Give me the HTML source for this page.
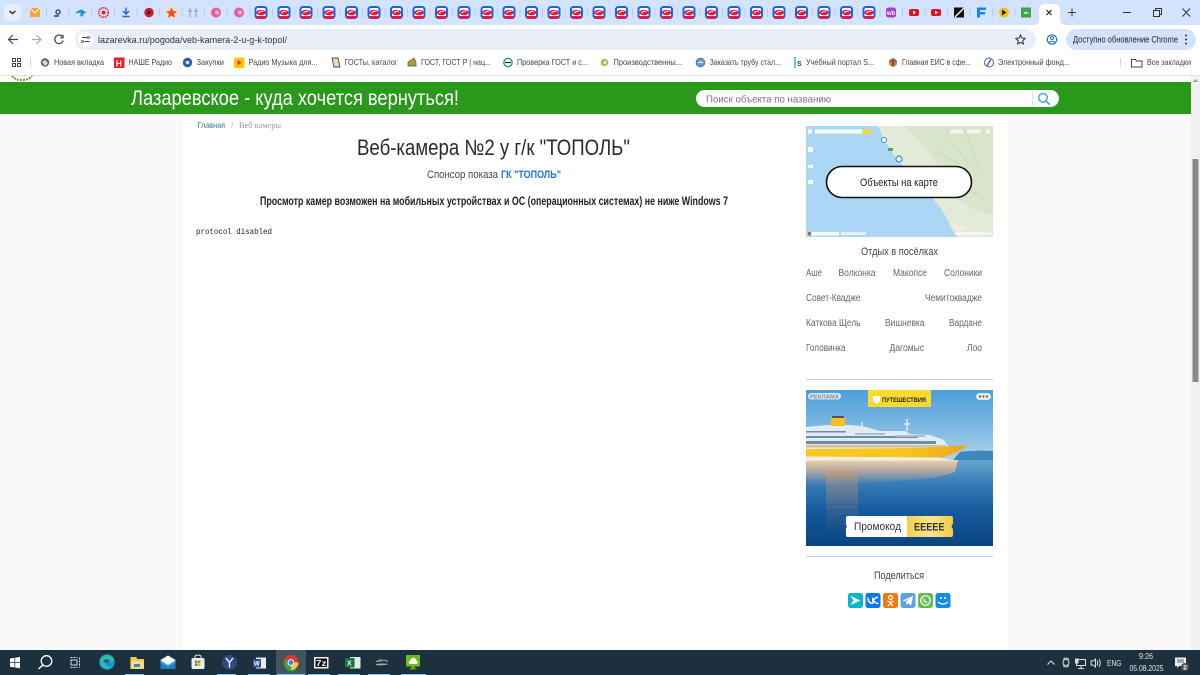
<!DOCTYPE html>
<html><head><meta charset="utf-8"><title>Веб-камера №2 у г/к "ТОПОЛЬ"</title>
<style>html,body{margin:0;padding:0;width:1200px;height:675px;overflow:hidden;background:#fff}svg{display:block}text{font-family:"Liberation Sans","Noto Sans CJK SC",sans-serif}.b{font-size:8.5px;fill:#444}.l{font-size:10px;fill:#666}</style></head><body>
<svg width="1200" height="675" viewBox="0 0 1200 675" xmlns="http://www.w3.org/2000/svg">
<defs>
<symbol id="r" viewBox="0 0 14 14" overflow="visible"><rect x="1.5" y="1.5" width="11" height="11" rx="2.5" fill="#fff" stroke="#1565e8" stroke-width="2"/><path d="M2 10.5h10v2.5H2z" fill="#e8173f"/><ellipse cx="7" cy="7" rx="4.6" ry="2.8" fill="#e8173f"/><path d="M4.5 7.5Q7 5 9.5 5.7" stroke="#fff" fill="none" stroke-width=".9"/></symbol>
<linearGradient id="sky" x1="0" y1="0" x2="0" y2="1"><stop offset="0" stop-color="#4c9fd9"/><stop offset=".6" stop-color="#85bde3"/><stop offset="1" stop-color="#b4d6ea"/></linearGradient>
<linearGradient id="sea" x1="0" y1="0" x2="0" y2="1"><stop offset="0" stop-color="#6ba4cf"/><stop offset=".3" stop-color="#3279b5"/><stop offset=".62" stop-color="#15599a"/><stop offset="1" stop-color="#0a4480"/></linearGradient>
<linearGradient id="refl" x1="0" y1="0" x2="0" y2="1"><stop offset="0" stop-color="#f0d3a8"/><stop offset=".45" stop-color="#c8ab98" stop-opacity=".75"/><stop offset="1" stop-color="#8f8f9f" stop-opacity="0"/></linearGradient>
<linearGradient id="refl2" x1="0" y1="0" x2="0" y2="1"><stop offset="0" stop-color="#d29a6c" stop-opacity=".5"/><stop offset="1" stop-color="#b07c60" stop-opacity="0"/></linearGradient>
<linearGradient id="hull" x1="0" y1="0" x2="1" y2="0"><stop offset="0" stop-color="#f9c81e"/><stop offset=".6" stop-color="#f8c520"/><stop offset="1" stop-color="#eea71a"/></linearGradient>
<linearGradient id="gold" x1="0" y1="0" x2="1" y2="0"><stop offset="0" stop-color="#f4cf4b"/><stop offset=".5" stop-color="#fbe68b"/><stop offset="1" stop-color="#f3cb45"/></linearGradient>
</defs>

<!-- page -->
<rect y="75" width="1200" height="575" fill="#f9f9f9"/>
<rect x="183" y="114" width="825" height="536" fill="#fff"/>
<rect y="75" width="1191" height="7" fill="#fff"/>
<rect y="82" width="1191" height="32" fill="#2a981b"/>
<path d="M12 76q3 4 10 4t10-4" fill="none" stroke="#9a8a2a" stroke-width="2" stroke-dasharray="2 1"/>
<rect x="1191" y="75" width="9" height="575" fill="#f1f1f1"/>
<rect x="1192.500" y="159" width="6" height="223" fill="#8a8a8a"/>
<path d="M1195.500 79l-3 3h6z" fill="#a3a3a3"/>
<text x="131" y="105" font-size="21" fill="#fff" textLength="328" lengthAdjust="spacingAndGlyphs">Лазаревское - куда хочется вернуться!</text>
<rect x="696" y="90" width="363" height="17" rx="8.500" fill="#fff"/>
<text x="706" y="102.500" font-size="10.500" fill="#777" textLength="125" lengthAdjust="spacingAndGlyphs">Поиск объекта по названию</text>
<path d="M1032.500 91v15" stroke="#e4e4e4"/>
<circle cx="1043" cy="97.800" r="4.300" fill="none" stroke="#45a9d2" stroke-width="1.500"/><path d="M1046 101l3.500 3.500" stroke="#45a9d2" stroke-width="1.700"/>

<!-- main content -->
<text x="197.500" y="128" font-size="8.500" fill="#3a7396" textLength="27.500" lengthAdjust="spacingAndGlyphs">Главная</text>
<text x="231" y="128" font-size="8.500" fill="#bbb">/</text>
<text x="239" y="128" font-size="8.500" fill="#999" style="font-family:'Liberation Serif',serif" textLength="42" lengthAdjust="spacingAndGlyphs">Веб камеры</text>
<text x="357" y="155" font-size="22" fill="#2b2b2b" textLength="273" lengthAdjust="spacingAndGlyphs">Веб-камера №2 у г/к "ТОПОЛЬ"</text>
<text x="427" y="178" font-size="11" fill="#444" textLength="71" lengthAdjust="spacingAndGlyphs">Спонсор показа</text>
<text x="501" y="178" font-size="11" font-weight="bold" fill="#1a73e8" textLength="60" lengthAdjust="spacingAndGlyphs">ГК "ТОПОЛЬ"</text>
<text x="260" y="205" font-size="11.500" font-weight="bold" fill="#222" textLength="468" lengthAdjust="spacingAndGlyphs">Просмотр камер возможен на мобильных устройствах и ОС (операционных системах) не ниже Windows 7</text>
<text x="196" y="234" font-size="8" fill="#222" style="font-family:'Liberation Mono',monospace" textLength="76" lengthAdjust="spacingAndGlyphs">protocol disabled</text>

<!-- map -->
<rect x="806" y="126" width="187" height="111" fill="#abd6f4"/>
<path d="M878 126Q886 146 899 162Q920 178 934 200Q946 214 950 226L957 237H993V126Z" fill="#e3ebd8"/>
<path d="M905 126Q940 160 950 190Q965 210 993 215V126Z" fill="#d6e4c8" opacity=".8"/>
<path d="M950 140l20 25M965 130l15 40M935 150l25 15M955 180l30 20" stroke="#c6d8b8" fill="none" stroke-width="2" opacity=".5"/>
<path d="M950 223l8 9 10-4z" fill="#f1ece0"/>
<rect x="815" y="129.500" width="57" height="4" fill="#fff"/><rect x="862" y="129.500" width="10" height="4" fill="#f8d53a"/>
<rect x="808" y="129.500" width="4" height="4" fill="#fff"/>
<rect x="950" y="129.500" width="13" height="4" rx="2" fill="#f4f6f2"/><rect x="967" y="129.500" width="14" height="4" rx="2" fill="#f4f6f2"/><rect x="986" y="129.500" width="4" height="4" fill="#f4f6f2"/>
<rect x="808" y="147" width="5" height="5" fill="#fff"/><rect x="808" y="165" width="5" height="3" fill="#fff"/><rect x="808" y="180" width="5" height="4" fill="#fff"/>
<rect x="808" y="232" width="31" height="3.500" fill="#fff"/><rect x="808" y="232" width="3" height="3.500" fill="#d8524a"/><rect x="841" y="232" width="25" height="3" fill="#fff" opacity=".65"/><rect x="955" y="232" width="36" height="3" fill="#fff" opacity=".55"/>
<rect x="888" y="148" width="5" height="3" fill="#4aa568"/>
<circle cx="884" cy="140" r="2.500" fill="#fff" stroke="#2f8fd8"/><circle cx="899" cy="159" r="3" fill="#fff" stroke="#2f8fd8" stroke-width="1.200"/>
<rect x="826.500" y="166.500" width="145" height="31" rx="15.500" fill="#fff" stroke="#111" stroke-width="1.600"/>
<text x="860" y="186" font-size="11" fill="#222" textLength="78" lengthAdjust="spacingAndGlyphs">Объекты на карте</text>

<!-- villages -->
<text x="861" y="255" font-size="11" fill="#444" textLength="77" lengthAdjust="spacingAndGlyphs">Отдых в посёлках</text>
<g>
<text class="l" x="806" y="276" textLength="16" lengthAdjust="spacingAndGlyphs">Аше</text>
<text class="l" x="838.500" y="276" textLength="37" lengthAdjust="spacingAndGlyphs">Волконка</text>
<text class="l" x="893" y="276" textLength="34" lengthAdjust="spacingAndGlyphs">Макопсе</text>
<text class="l" x="944" y="276" textLength="38" lengthAdjust="spacingAndGlyphs">Солоники</text>
<text class="l" x="806" y="301" textLength="54.500" lengthAdjust="spacingAndGlyphs">Совет-Квадже</text>
<text class="l" x="925" y="301" textLength="57" lengthAdjust="spacingAndGlyphs">Чемитоквадже</text>
<text class="l" x="806" y="326" textLength="54.500" lengthAdjust="spacingAndGlyphs">Каткова Щель</text>
<text class="l" x="885" y="326" textLength="39.500" lengthAdjust="spacingAndGlyphs">Вишневка</text>
<text class="l" x="949" y="326" textLength="33" lengthAdjust="spacingAndGlyphs">Вардане</text>
<text class="l" x="806" y="351" textLength="39.500" lengthAdjust="spacingAndGlyphs">Головинка</text>
<text class="l" x="889.500" y="351" textLength="34.500" lengthAdjust="spacingAndGlyphs">Дагомыс</text>
<text class="l" x="967" y="351" textLength="15" lengthAdjust="spacingAndGlyphs">Лоо</text>
</g>
<path d="M806 379.500h187M806 556.500h187" stroke="#ccc"/>

<!-- ad -->
<rect x="806" y="390" width="187" height="72" fill="url(#sky)"/>
<path d="M960 452q15-2 33-1v9h-40z" fill="#3f88bf"/>
<rect x="806" y="460" width="187" height="86" fill="url(#sea)"/>
<path d="M806 460H958L955 472L935 478L880 482L806 486Z" fill="url(#refl)"/>
<path d="M826 470h32v62h-32z" fill="url(#refl2)"/>
<g stroke="#0b4a8a" opacity=".3"><path d="M806 505h187M806 510h187M806 516h40M806 522h40M806 528h40M806 534h40M806 540h187"/></g>
<!-- ship -->
<path d="M806 427L828 425H848L862 426L880 431L905 431L910 434L930 435L944 440L948 447L806 451Z" fill="#e4ecf3"/>
<path d="M806 436h112v2H806zM806 441h130v3H806zM806 431h40v1.500H806z" fill="#6b8cac"/>
<path d="M855 433h30v2h-30zM895 435h30v2h-30z" fill="#a6bfd6"/>
<path d="M806 445h140v2.500H806z" fill="#d7c08a"/>
<rect x="831" y="418" width="14" height="8" fill="#f5c11f"/><rect x="832" y="416" width="12" height="2" fill="#4b5660"/>
<path d="M862 428v-6M907 431v-12M904 424h6" stroke="#e0e8ef" stroke-width="1.500"/>
<path d="M806 449L925 448L968 445L961 450Q950 456 938 458L806 457Z" fill="url(#hull)"/>
<path d="M806 456.500L938 457.500L955 460.500H806Z" fill="#eef0e8"/>
<rect x="868" y="390" width="63" height="17" rx="1" fill="#fcd92f"/>
<path d="M873 396h7v5l-3.500 3-3.500-3z" fill="#fff"/>
<text x="882" y="402" font-size="6.500" font-weight="bold" fill="#222" textLength="44" lengthAdjust="spacingAndGlyphs">ПУТЕШЕСТВИЯ</text>
<rect x="808" y="393" width="33" height="6.500" rx="3.200" fill="#d9e7f1"/>
<text x="810" y="398.500" font-size="5.500" font-weight="bold" fill="#7e8c99" textLength="29" lengthAdjust="spacingAndGlyphs">РЕКЛАМА</text>
<rect x="976" y="393" width="15" height="7" rx="3.500" fill="#dfeaf2"/>
<circle cx="980" cy="396.500" r="1" fill="#444"/><circle cx="983.500" cy="396.500" r="1" fill="#444"/><circle cx="987" cy="396.500" r="1" fill="#444"/>
<path d="M848 516h59v21h-59a2 2 0 0 1-2-2v-6.500a3 3 0 0 0 0-4V518a2 2 0 0 1 2-2z" fill="#fff"/>
<path d="M907 516h44a2 2 0 0 1 2 2v6a3 3 0 0 0 0 5v6a2 2 0 0 1-2 2h-44z" fill="url(#gold)"/>
<text x="854" y="530" font-size="11" fill="#333" textLength="47" lengthAdjust="spacingAndGlyphs">Промокод</text>
<text x="914" y="530.500" font-size="11" font-weight="bold" fill="#333" textLength="30.500" lengthAdjust="spacingAndGlyphs">ЕЕЕЕЕ</text>

<text x="874" y="579" font-size="11" fill="#444" textLength="50" lengthAdjust="spacingAndGlyphs">Поделиться</text>
<!-- share -->
<rect x="848" y="593" width="15" height="15" rx="2.500" fill="#08b8c8"/><path d="M850.500 596l10 4.500-10 4.500 3-4.500zM853.500 600.500h4" fill="#fff"/>
<rect x="865.500" y="593" width="15" height="15" rx="2.500" fill="#0b79f2"/><path d="M868 597.500c0 4 2 5.800 4.800 5.800v-5.800M873 600.500l3-3M873 600.500l3.500 3M876 597.500h2M876.500 603.300h2" stroke="#fff" stroke-width="1.400" fill="none"/>
<rect x="883" y="593" width="15" height="15" rx="2.500" fill="#f7780f"/><circle cx="890.500" cy="597.500" r="2" fill="none" stroke="#fff" stroke-width="1.200"/><path d="M887.500 601q3 2 6 0M890.500 602v2M890.500 603l-2.500 3M890.500 603l2.500 3" stroke="#fff" stroke-width="1.200" fill="none"/>
<rect x="900.500" y="593" width="15" height="15" rx="2.500" fill="#5da4dc"/><path d="M902.500 600.500l10.500-4.500-1.800 9.500-3.200-2.300-1.700 1.600-.4-3 4.500-3.500-5.700 3z" fill="#fff"/>
<rect x="918" y="593" width="15" height="15" rx="2.500" fill="#65bc54"/><circle cx="925.500" cy="600.500" r="4.700" fill="none" stroke="#fff" stroke-width="1.200"/><path d="M923.800 598.500q0 3.500 3.500 4" stroke="#fff" stroke-width="1.300" fill="none"/>
<rect x="935.500" y="593" width="15" height="15" rx="2.500" fill="#168de2"/><circle cx="941" cy="598" r="1" fill="#fff"/><circle cx="945" cy="598" r="1" fill="#fff"/><path d="M938 602q5 4 10 0" stroke="#fff" stroke-width="1.200" fill="none"/>

<!-- chrome tab strip -->
<rect width="1200" height="25" fill="#d3e3fd"/>
<rect x="4" y="4" width="17" height="17" rx="5" fill="#e8effb"/><path d="M9.500 11l3 2.500 3-2.500" stroke="#222" stroke-width="1.400" fill="none"/>
<g stroke="#b5cdf4"><path d="M46.500 8v9M69 8v9M91.500 8v9M114.500 8v9M137 8v9M159.500 8v9M182 8v9M204.500 8v9M227 8v9M250 8v9"/></g>
<path d="M30 8h10v9H30z" fill="#f7a23b"/><path d="M30 8l5 5 5-5" stroke="#fff" fill="none"/>
<circle cx="58" cy="12" r="2" fill="none" stroke="#2a5a8c" stroke-width="1.500"/><path d="M54 16h4v-1" stroke="#244a75" stroke-width="1.500" fill="none"/>
<path d="M76 13q5-5 10 0M81 10a2.500 3 0 1 1-.1 6z" fill="#2a8fd3" stroke="#2a8fd3"/>
<circle cx="103.500" cy="12.500" r="4.800" fill="none" stroke="#e2232e" stroke-width="1.500" stroke-dasharray="1.500 .7"/><circle cx="103.500" cy="12.500" r="2" fill="#e2232e"/>
<path d="M126 7.500v6M123 11l3 3 3-3M122.500 16.500h7" stroke="#1f66c4" stroke-width="1.400" fill="none"/>
<circle cx="149" cy="12.500" r="4.700" fill="#d5182b"/><circle cx="149" cy="12.500" r="1.700" fill="#222"/>
<rect x="166" y="7" width="11" height="11" fill="#f2dcc4"/><path d="M171.500 7.500l1.600 3.500 3.900.4-3 2.500 1 3.800-3.500-2-3.500 2 1-3.800-3-2.500 3.900-.4z" fill="#e8512a"/>
<path d="M190 8v9M196 8v9M188 11h4M194 11h4" stroke="#9aa7b2" stroke-width="1.300" fill="none"/>
<circle cx="216" cy="12.500" r="5" fill="#e35f9d"/><circle cx="217" cy="12.500" r="2" fill="#f3b2d0"/>
<circle cx="239" cy="12.500" r="5" fill="#e35f9d"/><circle cx="240" cy="12.500" r="2" fill="#f3b2d0"/>

<g stroke="#b5cdf4">
<path d="M272.500 8v9M295 8v9M317.500 8v9M340 8v9M362.500 8v9M385 8v9M407.500 8v9M430 8v9M452.500 8v9M475 8v9M497.500 8v9M520 8v9M542.500 8v9M565 8v9M587.500 8v9M610 8v9M632.500 8v9M655 8v9M677.500 8v9M700 8v9M722.500 8v9M745 8v9M767.500 8v9M790 8v9M812.500 8v9M835 8v9M857.500 8v9M880 8v9M902.500 8v9M925 8v9M947.500 8v9M970 8v9M992.500 8v9M1015 8v9"/>
</g>
<use href="#r" x="254" y="5.500" width="14" height="14"/><use href="#r" x="277" y="5.500" width="14" height="14"/><use href="#r" x="299" y="5.500" width="14" height="14"/><use href="#r" x="322" y="5.500" width="14" height="14"/><use href="#r" x="344.500" y="5.500" width="14" height="14"/><use href="#r" x="367" y="5.500" width="14" height="14"/><use href="#r" x="389.500" y="5.500" width="14" height="14"/><use href="#r" x="412" y="5.500" width="14" height="14"/><use href="#r" x="434.500" y="5.500" width="14" height="14"/><use href="#r" x="457" y="5.500" width="14" height="14"/><use href="#r" x="480" y="5.500" width="14" height="14"/><use href="#r" x="502" y="5.500" width="14" height="14"/><use href="#r" x="524.500" y="5.500" width="14" height="14"/><use href="#r" x="547" y="5.500" width="14" height="14"/><use href="#r" x="569.500" y="5.500" width="14" height="14"/><use href="#r" x="592" y="5.500" width="14" height="14"/><use href="#r" x="614.500" y="5.500" width="14" height="14"/><use href="#r" x="637" y="5.500" width="14" height="14"/><use href="#r" x="659.500" y="5.500" width="14" height="14"/><use href="#r" x="682" y="5.500" width="14" height="14"/><use href="#r" x="704.500" y="5.500" width="14" height="14"/><use href="#r" x="727" y="5.500" width="14" height="14"/><use href="#r" x="749.500" y="5.500" width="14" height="14"/><use href="#r" x="772" y="5.500" width="14" height="14"/><use href="#r" x="794.500" y="5.500" width="14" height="14"/><use href="#r" x="817" y="5.500" width="14" height="14"/><use href="#r" x="839.500" y="5.500" width="14" height="14"/><use href="#r" x="862" y="5.500" width="14" height="14"/>

<rect x="886" y="7.500" width="10" height="10" rx="2.500" fill="#a63fcb"/><text x="887" y="15" font-size="6.500" font-weight="bold" fill="#fff" textLength="8" lengthAdjust="spacingAndGlyphs">wb</text>
<rect x="909" y="9" width="10" height="7" rx="2" fill="#e3101f"/><path d="M913 10.500l3 2-3 2z" fill="#fff"/>
<rect x="931" y="9" width="10" height="7" rx="2" fill="#e3101f"/><path d="M935 10.500l3 2-3 2z" fill="#fff"/>
<rect x="954" y="7.500" width="10" height="10" fill="#111"/><path d="M955 17l9-9" stroke="#fff" stroke-width="1.300"/>
<path d="M977 7.500h9v2.500h-6v2h5v2.500h-5v3h-3z" fill="#1787f0"/>
<circle cx="1004" cy="12.500" r="5" fill="#f4c40c"/><path d="M1002 9.500l4.500 3-4.500 3z" fill="#222"/>
<rect x="1021" y="7.500" width="10" height="10" fill="#3fa34d"/><path d="M1023 14q3-5 6 0z" fill="#a9dcae"/>
<path d="M1033 25q6 0 6-6v-9q0-6 6-6h9q6 0 6 6v9q0 6 6 6z" fill="#fff"/>
<path d="M1046.500 10l5 5M1051.500 10l-5 5" stroke="#222" stroke-width="1.200"/>
<path d="M1072 8.500v8M1068 12.500h8" stroke="#444" stroke-width="1.100"/>
<path d="M1123 12.500h8" stroke="#333"/>
<rect x="1153.500" y="10.500" width="6" height="6" fill="none" stroke="#333"/><path d="M1155.500 10.500v-2h6v6h-2" fill="none" stroke="#333"/>
<path d="M1182.500 8.500l7.500 8M1190 8.500l-7.500 8" stroke="#333"/>

<!-- toolbar -->
<rect y="25" width="1200" height="25" fill="#fff"/>
<path d="M9 39.500h9M13 35l-4.500 4.500 4.500 4.500" stroke="#444" stroke-width="1.200" fill="none"/>
<path d="M32 39.500h8.500M36.500 35l4.500 4.500-4.500 4.500" stroke="#aaa" stroke-width="1.200" fill="none"/>
<path d="M62.800 37.200a4.300 4.300 0 1 0 .4 3.300M63 34.800v3h-3" stroke="#444" stroke-width="1.200" fill="none"/>
<rect x="75" y="29" width="961" height="21" rx="10.500" fill="#e9eef8"/>
<circle cx="85.500" cy="39.500" r="7.500" fill="#fff"/>
<path d="M82 37.500h5M84.500 41.500h5" stroke="#444"/><circle cx="88.500" cy="37.500" r="1" fill="none" stroke="#444" stroke-width=".8"/><circle cx="82.500" cy="41.500" r="1" fill="none" stroke="#444" stroke-width=".8"/>
<text x="98" y="43" font-size="9.500" fill="#333" textLength="189" lengthAdjust="spacingAndGlyphs">lazarevka.ru/pogoda/veb-kamera-2-u-g-k-topol/</text>
<path d="M1020.500 35l1.400 3 3.300.4-2.400 2.200.6 3.300-2.900-1.600-2.900 1.600.6-3.300-2.400-2.200 3.300-.4z" fill="none" stroke="#333"/>
<circle cx="1052" cy="39.500" r="4.700" fill="none" stroke="#1a6fdb" stroke-width="1.200"/><circle cx="1052" cy="38" r="1.500" fill="none" stroke="#1a6fdb"/><path d="M1049 42.500q3-2.500 6 0" fill="none" stroke="#1a6fdb"/>
<rect x="1066" y="29" width="130" height="21" rx="10.500" fill="#d3e3fd"/>
<text x="1073" y="42.500" font-size="9" fill="#222" textLength="105" lengthAdjust="spacingAndGlyphs">Доступно обновление Chrome</text>
<circle cx="1186" cy="35.500" r="1" fill="#333"/><circle cx="1186" cy="39.500" r="1" fill="#333"/><circle cx="1186" cy="43.500" r="1" fill="#333"/>

<!-- bookmarks -->
<rect y="50" width="1200" height="25" fill="#fff"/>
<path d="M0 75.500h1200" stroke="#dfe1e5"/>
<g fill="none" stroke="#444" stroke-width="1"><rect x="12.500" y="58.500" width="3" height="3"/><rect x="17.500" y="58.500" width="3" height="3"/><rect x="12.500" y="63.500" width="3" height="3"/><rect x="17.500" y="63.500" width="3" height="3"/></g>
<path d="M30.500 58v9M1120.500 58v9" stroke="#c9d4e6"/>
<circle cx="45" cy="62.500" r="4.200" fill="#5b6570"/><path d="M42 62l3-2 3 3-3 3z" fill="#d8dde2"/>
<rect x="114" y="57.500" width="10.500" height="10.500" fill="#ee1c25"/><text x="115.800" y="66.500" font-size="8.500" font-weight="bold" fill="#fff">Н</text>
<circle cx="187.500" cy="62.500" r="4.700" fill="#2a5ca8"/><circle cx="187.500" cy="62.500" r="1.800" fill="#d9e4f3"/>
<rect x="234" y="57.500" width="10.500" height="10.500" rx="1.500" fill="#ffc800"/><path d="M237.500 60l4 2.700-4 2.700z" fill="#e2231a"/>
<path d="M332 58h6l2 9h-6z" fill="#ecd9b8" stroke="#544" stroke-width=".9"/>
<path d="M408 66h8v-4l-2-4-3 2-3 2z" fill="#a99b3c" stroke="#5c5a2a" stroke-width=".7"/>
<circle cx="508" cy="62.500" r="4.200" fill="none" stroke="#1d9b57" stroke-width="1.300"/><path d="M505 62.500h6" stroke="#222" stroke-width="1.200"/>
<circle cx="604.500" cy="62.500" r="3.800" fill="#a6bf62"/><circle cx="605" cy="62.500" r="1.400" fill="#eee"/>
<circle cx="700.500" cy="62.500" r="4.500" fill="#6f97c6" stroke="#3f71ad" stroke-width=".7"/><path d="M698 63q2.500-2 5 0" stroke="#fff" fill="none"/>
<path d="M795 57v11" stroke="#6fc4e6" stroke-width="2"/><text x="797" y="66" font-size="7" fill="#27416a" font-weight="bold">S</text>
<circle cx="893" cy="62.500" r="4.200" fill="#b6874a"/><path d="M893 58.500v8" stroke="#8a3a2a" stroke-width="1.500"/><path d="M889.500 61h7" stroke="#8a3a2a"/>
<circle cx="989" cy="62.500" r="4.500" fill="none" stroke="#3b6da8" stroke-width="1"/><path d="M987 66l4-7" stroke="#3b6da8" stroke-width="1.400"/>
<path d="M1131.500 59.500h4l1 1.500h5.500v6h-10.500z" fill="none" stroke="#444"/>
<text class="b" x="54" y="65" textLength="50" lengthAdjust="spacingAndGlyphs">Новая вкладка</text>
<text class="b" x="128.500" y="65" textLength="43.500" lengthAdjust="spacingAndGlyphs">НАШЕ Радио</text>
<text class="b" x="196.500" y="65" textLength="27.500" lengthAdjust="spacingAndGlyphs">Закупки</text>
<text class="b" x="248.500" y="65" textLength="69" lengthAdjust="spacingAndGlyphs">Радио Музыка для...</text>
<text class="b" x="344.500" y="65" textLength="53" lengthAdjust="spacingAndGlyphs">ГОСТы, каталог</text>
<text class="b" x="421" y="65" textLength="70" lengthAdjust="spacingAndGlyphs">ГОСТ, ГОСТ Р | нац...</text>
<text class="b" x="517" y="65" textLength="71" lengthAdjust="spacingAndGlyphs">Проверка ГОСТ и с...</text>
<text class="b" x="613.500" y="65" textLength="68.500" lengthAdjust="spacingAndGlyphs">Производственны...</text>
<text class="b" x="709.500" y="65" textLength="71.500" lengthAdjust="spacingAndGlyphs">Заказать трубу стал...</text>
<text class="b" x="806" y="65" textLength="68" lengthAdjust="spacingAndGlyphs">Учебный портал S...</text>
<text class="b" x="902" y="65" textLength="69" lengthAdjust="spacingAndGlyphs">Главная ЕИС в сфе...</text>
<text class="b" x="998" y="65" textLength="72" lengthAdjust="spacingAndGlyphs">Электронный фонд...</text>
<text class="b" x="1147" y="65" textLength="44" lengthAdjust="spacingAndGlyphs">Все закладки</text>

<!-- taskbar -->
<rect y="650" width="1200" height="25" fill="#1c303d"/>
<rect x="276" y="650" width="30" height="25" fill="#41555f"/>
<path d="M10 658.500l4.500-.7v4.500H10zM15.200 657.700l4.800-.8v5.400h-4.800zM10 663h4.500v4.500l-4.500-.7zM15.200 663H20v5.300l-4.800-.8z" fill="#fff"/>
<circle cx="46.500" cy="661" r="5.300" fill="none" stroke="#fff" stroke-width="1.300"/><path d="M43 665l-4.500 4" stroke="#fff" stroke-width="1.500"/>
<g fill="none" stroke="#dde" stroke-width="1"><rect x="71" y="660" width="6" height="5"/><path d="M70.500 657.500h7M70.500 667.500h7M79.500 657.500v10" stroke-dasharray="2 1"/></g>
<circle cx="107" cy="662" r="7.800" fill="#1d90d6"/><path d="M100.500 659q6-7.500 13-.5 1 4-4 4 2-3-2-3.500-5 .5-2 6 3 3 8.500 1-6.500 5.500-12.500 0-2-3-1-7z" fill="#2cc294"/><path d="M103 662q1-3 4-2.500 2 .7 2 3" fill="#0b5aa5"/>
<path d="M130.500 657h5.500l1.500 2h6.500v10h-13.500z" fill="#f4c54f"/><rect x="130.500" y="661" width="13.500" height="7.500" fill="#fadb7c"/><rect x="134" y="664" width="6" height="3" fill="#2a8ad4"/>
<path d="M160.500 660.500l7.500-5 7.500 5v8h-15z" fill="#2a9ce0"/><path d="M160.500 660.500l7.500 4.500 7.500-4.500v-.5l-7.500-4.500-7.500 4.500" fill="#fff" opacity=".95"/><path d="M160.500 663l7.500 4 7.500-4v6h-15z" fill="#1c7fc4"/>
<rect x="191.500" y="658" width="13" height="11" rx="1.500" fill="#eef0ee"/><path d="M195 658v-2q3-2 6 0v2" stroke="#eef0ee" fill="none"/><rect x="195" y="660.500" width="2.500" height="2.500" fill="#e8512a"/><rect x="198" y="660.500" width="2.500" height="2.500" fill="#7ab800"/><rect x="195" y="663.500" width="2.500" height="2.500" fill="#1d90d6"/><rect x="198" y="663.500" width="2.500" height="2.500" fill="#f4b400"/>
<circle cx="229.500" cy="662.500" r="7.500" fill="#2f4a80"/><path d="M226 658l3.500 4.500 3.500-4.500M229.500 662.500v5" stroke="#fff" stroke-width="1.400" fill="none"/>
<rect x="256" y="657.500" width="10" height="11" fill="#e6edf7"/><rect x="253" y="659" width="8" height="8.500" fill="#2b579a"/><text x="254" y="665.500" font-size="6" font-weight="bold" fill="#fff">W</text>
<circle cx="291" cy="662.500" r="7.500" fill="#e2372c"/><path d="M291 662.500L296 670a7.500 7.500 0 0 1-10.800-2.500L284.500 659z" fill="#2fa84e"/><path d="M291 662.500l7.500 0a7.500 7.500 0 0 1-3.900 6.600L291 670z" fill="#f9c631"/><circle cx="291" cy="662.500" r="3.400" fill="#fff"/><circle cx="291" cy="662.500" r="2.500" fill="#3d84e5"/>
<rect x="314" y="657" width="14.500" height="11.500" fill="#f0f0f0"/><rect x="315.500" y="658.500" width="11.500" height="8.500" fill="#141414"/><text x="316" y="666" font-size="8" font-weight="bold" fill="#eee" textLength="10.500" lengthAdjust="spacingAndGlyphs">7z</text>
<rect x="350" y="657" width="10.500" height="11.500" fill="#dfeee4"/><rect x="345" y="658" width="9.500" height="9.500" fill="#1d7044"/><text x="347" y="665.500" font-size="7" font-weight="bold" fill="#fff">X</text>
<path d="M375 662q8-5 14-.5-7-1-12 .5zM376 664q6-1 13 0-6 2-13 1z" fill="#a5aeb0"/><path d="M378 659q6 0 9 4" stroke="#555" fill="none"/>
<rect x="406" y="655" width="14" height="11.500" rx="1" fill="#6ebd1f"/><path d="M409 664q-1-3 1.500-3.500 1-3 3-2.500 2.500 0 2.700 2.500 2 .5 1.300 3.500z" fill="#fff"/><path d="M411.500 667h3v2h-3zM409.500 669h7" stroke="#5ca81a" fill="#5ca81a"/>
<g fill="#8cc6ec"><rect x="125" y="674" width="19" height="1"/><rect x="217" y="674" width="19" height="1"/><rect x="248" y="674" width="22" height="1"/><rect x="277" y="674" width="28" height="1"/><rect x="308" y="674" width="22" height="1"/><rect x="338" y="674" width="22" height="1"/><rect x="368" y="674" width="22" height="1"/><rect x="401" y="674" width="25" height="1"/></g>
<path d="M1047.500 664.500l3.500-3.500 3.500 3.500" stroke="#ddd" fill="none" stroke-width="1.100"/>
<circle cx="1066" cy="662.500" r="3" fill="none" stroke="#ddd"/><path d="M1063 659.500q3-3 6 0M1063 665.500q3 3 6 0" stroke="#ddd" fill="none"/>
<rect x="1076.500" y="659.500" width="9" height="6" fill="none" stroke="#ddd"/><path d="M1081 665.500v3M1078 668.500h6" stroke="#ddd"/><rect x="1075" y="658.500" width="3.500" height="5" fill="#ddd"/>
<path d="M1091 661h2l2.500-2v8l-2.500-2h-2z" fill="none" stroke="#ddd"/><path d="M1097 660.500q1.500 2.500 0 5M1099 659q2.500 4 0 8" stroke="#ddd" fill="none"/>
<text x="1107" y="666" font-size="8.500" fill="#e5e5e5" textLength="14.500" lengthAdjust="spacingAndGlyphs">ENG</text>
<text x="1139" y="659" font-size="8.500" fill="#e5e5e5" textLength="14" lengthAdjust="spacingAndGlyphs">9:26</text>
<text x="1129.500" y="671" font-size="8.500" fill="#e5e5e5" textLength="34" lengthAdjust="spacingAndGlyphs">05.08.2025</text>
<path d="M1175 657.500h11v8.500h-7l-2 2v-2h-2z" fill="#eee"/><path d="M1177 660h7M1177 662h7" stroke="#1c303d" stroke-width=".7"/>
<circle cx="1185" cy="667" r="4" fill="#555"/><text x="1183.300" y="669.500" font-size="6.500" font-weight="bold" fill="#fff">2</text>
</svg>
</body></html>
